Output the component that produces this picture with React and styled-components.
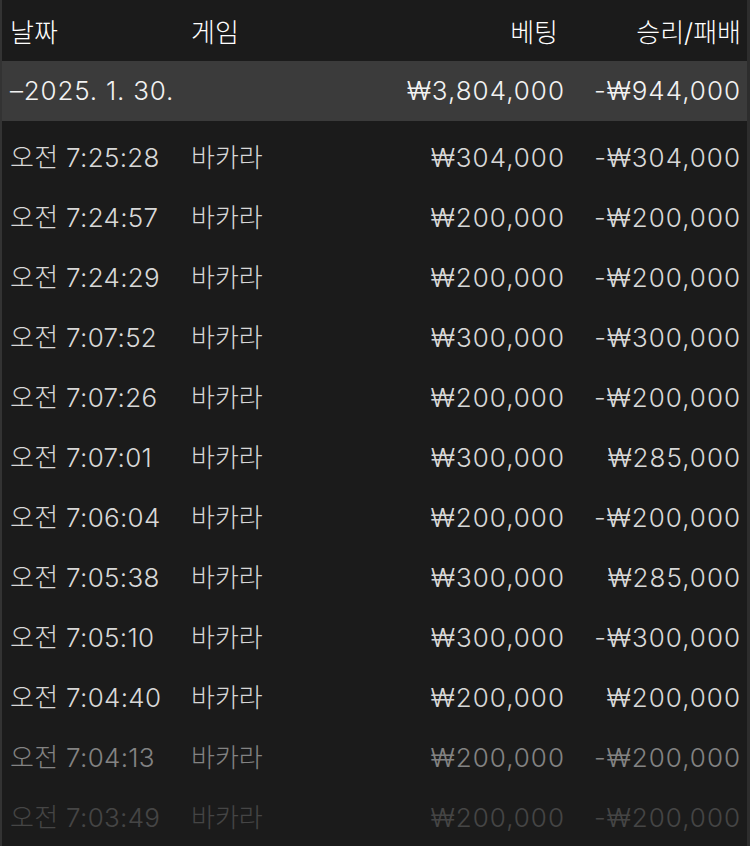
import React from 'react';
import styled, { createGlobalStyle } from 'styled-components';

const GlobalStyle = createGlobalStyle`
  html, body {
    margin: 0;
    padding: 0;
    background: #1b1b1b;
  }
  body {
    font-family: Inter, "Noto Sans CJK KR", sans-serif;
  }
`;

const rows = [
  ['오전 7:25:28', '바카라', '₩304,000', '-₩304,000'],
  ['오전 7:24:57', '바카라', '₩200,000', '-₩200,000'],
  ['오전 7:24:29', '바카라', '₩200,000', '-₩200,000'],
  ['오전 7:07:52', '바카라', '₩300,000', '-₩300,000'],
  ['오전 7:07:26', '바카라', '₩200,000', '-₩200,000'],
  ['오전 7:07:01', '바카라', '₩300,000', '₩285,000'],
  ['오전 7:06:04', '바카라', '₩200,000', '-₩200,000'],
  ['오전 7:05:38', '바카라', '₩300,000', '₩285,000'],
  ['오전 7:05:10', '바카라', '₩300,000', '-₩300,000'],
  ['오전 7:04:40', '바카라', '₩200,000', '₩200,000'],
  ['오전 7:04:13', '바카라', '₩200,000', '-₩200,000'],
  ['오전 7:03:49', '바카라', '₩200,000', '-₩200,000'],
];

const fades = { 10: 0.55, 11: 0.22 };

function App() {
  return (
    <>
      <GlobalStyle />
      <Table>
        <HeaderRow>
          <Cell $color="#fff">날짜</Cell>
          <Cell $color="#fff">게임</Cell>
          <Cell $color="#fff" $right $pad={7}>베팅</Cell>
          <Cell $color="#fff" $right>승리/패배</Cell>
        </HeaderRow>
        <GroupRow>
          <Cell $color="#f2f2f2" $spacing={0.8}>–2025. 1. 30.</Cell>
          <Cell />
          <Cell $color="#f2f2f2" $right $spacing={1}>₩3,804,000</Cell>
          <Cell $color="#f2f2f2" $right $spacing={1}>-₩944,000</Cell>
        </GroupRow>
        <Body>
          {rows.map((r, i) => (
            <Row key={i} $fade={fades[i]}>
              <Cell $spacing={0.3}>{r[0]}</Cell>
              <Cell>{r[1]}</Cell>
              <Cell $right $spacing={1}>{r[2]}</Cell>
              <Cell $right $spacing={1}>{r[3]}</Cell>
            </Row>
          ))}
        </Body>
      </Table>
    </>
  );
}

export default App;

const Table = styled.div`
  height: 846px;
  overflow: hidden;
  border-left: 2px solid #333333;
  border-right: 3px solid #2d2d2d;
  background: #1b1b1b;
  box-sizing: border-box;
`;

const Row = styled.div`
  display: grid;
  grid-template-columns: 181px 1fr 200px 176px;
  align-items: center;
  box-sizing: border-box;
  height: 60px;
  padding: 1px 6px 0 8px;
  opacity: ${(p) => (p.$fade !== undefined ? p.$fade : 1)};
`;

const HeaderRow = styled(Row)`
  height: 61px;
  padding-top: 4px;
`;

const GroupRow = styled(Row)`
  background: #3b3b3b;
  padding-top: 0;
`;

const Body = styled.div`
  padding-top: 6px;
`;

const Cell = styled.div`
  font-size: 26px;
  line-height: 32px;
  font-weight: 300;
  color: ${(p) => p.$color || '#d8d8d8'};
  text-align: ${(p) => (p.$right ? 'right' : 'left')};
  padding-right: ${(p) => p.$pad || 0}px;
  letter-spacing: ${(p) => p.$spacing || 0}px;
  white-space: nowrap;
`;
